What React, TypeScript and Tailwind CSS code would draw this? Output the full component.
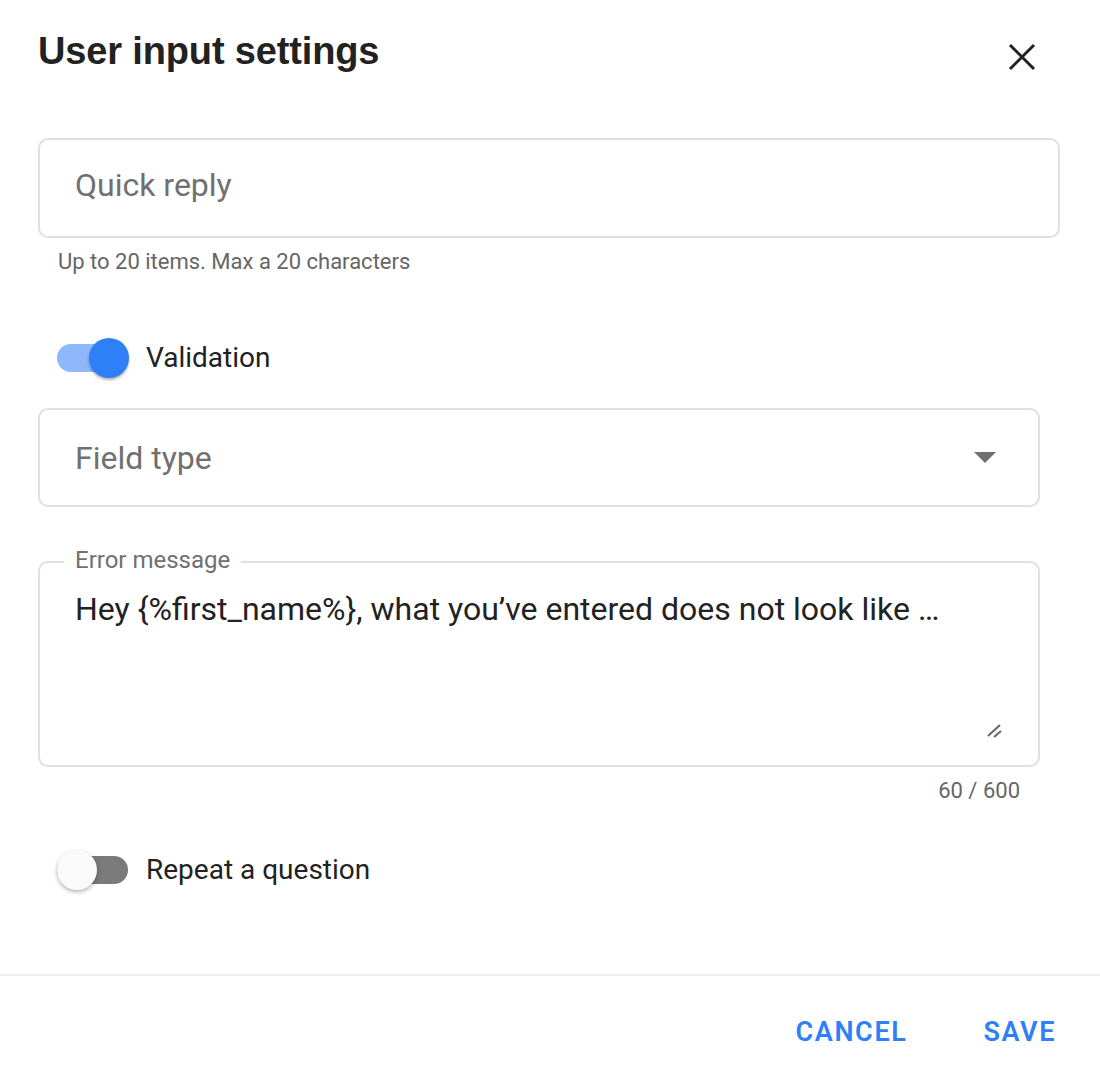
import React from 'react';

function Toggle({ on }: { on: boolean }) {
  return (
    <div className="relative w-[72px] h-[44px] flex items-center">
      <div
        className={
          on
            ? 'w-[68px] h-[28px] rounded-full bg-[#8db8fb]'
            : 'w-[71px] h-[28px] rounded-full bg-[#7a7a7a]'
        }
      />
      <div
        className={
          on
            ? 'absolute left-[32px] top-[2px] w-[40px] h-[40px] rounded-full bg-[#2f7ff9] shadow-[0_2px_3px_rgba(0,0,0,0.3)]'
            : 'absolute left-[0px] top-[2px] w-[40px] h-[40px] rounded-full bg-[#fafafa] shadow-[0_2px_4px_rgba(0,0,0,0.3)]'
        }
      />
    </div>
  );
}

export default function App() {
  return (
    <div className="w-[1100px] h-[1088px] bg-white font-['Roboto',sans-serif] text-[#222] flex flex-col">
      <div className="flex items-start justify-between pl-[38px] pr-[64px] pt-[28px]">
        <h1 className="font-['Liberation_Sans',Arial,sans-serif] font-bold text-[38px] leading-[46px] tracking-[-0.15px] text-[#222]">
          User input settings
        </h1>
        <svg width="28" height="28" viewBox="0 0 28 28" className="mt-[15px]">
          <path d="M2 2 L26 26 M26 2 L2 26" stroke="#222" strokeWidth="3" />
        </svg>
      </div>

      <div className="px-[38px] pt-[64px] flex flex-col">
        <div className="w-[1022px] h-[100px] border-2 border-[#e0e0e0] rounded-[10px] flex items-center px-[35px] pb-[7px]">
          <span className="text-[32px] text-[#707070]">Quick reply</span>
        </div>
        <div className="pl-[20px] pt-[11px] text-[22px] leading-[26px] text-[#666]">
          Up to 20 items. Max a 20 characters
        </div>

        <div className="flex items-center gap-[17px] pl-[19px] mt-[61px]">
          <Toggle on />
          <span className="text-[28px] text-[#222]">Validation</span>
        </div>

        <div className="mt-[28px] w-[1002px] h-[99px] border-2 border-[#e0e0e0] rounded-[10px] flex items-center justify-between pl-[35px] pr-[42px]">
          <span className="text-[32px] text-[#707070]">Field type</span>
          <svg width="22" height="12" viewBox="0 0 22 12">
            <path d="M0 0 L22 0 L11 11 Z" fill="#707070" />
          </svg>
        </div>

        <div className="relative mt-[54px] w-[1002px] h-[206px] border-2 border-[#e0e0e0] rounded-[10px] pl-[35px] pt-[26px]">
          <span className="absolute left-[24px] top-[-18px] bg-white px-[11px] text-[24px] leading-[30px] text-[#707070]">
            Error message
          </span>
          <span className="text-[32px] leading-[40px] text-[#222]">
            Hey {'{%first_name%}'}, what you’ve entered does not look like …
          </span>
          <svg width="16" height="14" viewBox="0 0 16 14" className="absolute right-[35px] bottom-[27px]">
            <path d="M1 12 L13 1 M7 13 L14 7" stroke="#666" strokeWidth="2" />
          </svg>
        </div>
        <div className="w-[982px] text-right pt-[11px] text-[22px] leading-[26px] text-[#666]">60 / 600</div>

        <div className="flex items-center gap-[17px] pl-[19px] mt-[44px]">
          <Toggle on={false} />
          <span className="text-[28px] text-[#222]">Repeat a question</span>
        </div>
      </div>

      <div className="mt-auto border-t-2 border-[#ededed] h-[114px] flex items-center justify-end gap-[76px] pr-[44px]">
        <button className="text-[27px] font-semibold tracking-[1.6px] text-[#2f7ff9]">CANCEL</button>
        <button className="text-[27px] font-semibold tracking-[1.6px] text-[#2f7ff9]">SAVE</button>
      </div>
    </div>
  );
}
